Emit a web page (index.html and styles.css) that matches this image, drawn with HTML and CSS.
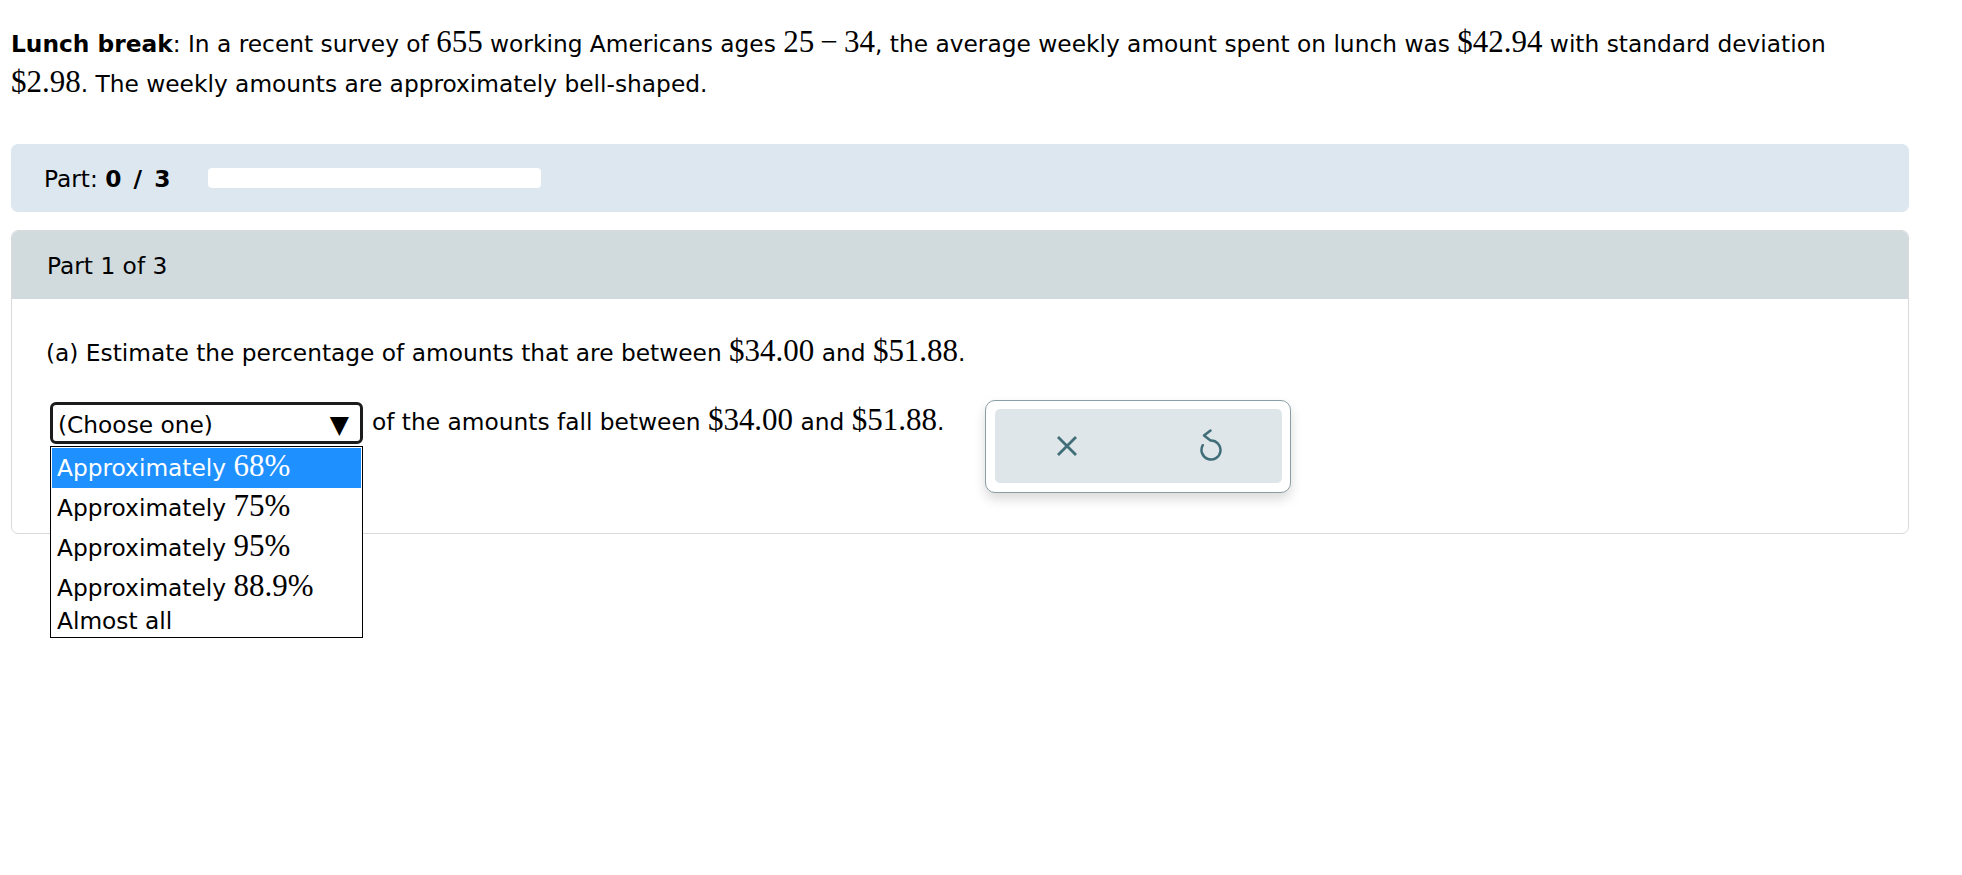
FILE: index.html
```html
<!DOCTYPE html>
<html>
<head>
<meta charset="utf-8">
<link rel="stylesheet" href="styles.css">
</head>
<body>
<div class="page">
  <p class="intro"><b>Lunch break</b>: In a recent survey of <span class="m">655</span> working Americans ages <span class="m">25&#8201;&#8722;&#8201;34</span>, the average weekly amount spent on lunch was <span class="m">$42.94</span> with standard deviation <span class="m">$2.98</span>. The weekly amounts are approximately bell-shaped.</p>

  <div class="progress">
    <span>Part: <b class="score">0 / 3</b></span>
    <div class="bar"></div>
  </div>

  <div class="card">
    <div class="card-head">Part 1 of 3</div>
    <div class="card-body">
      <p class="q">(a) Estimate the percentage of amounts that are between <span class="m">$34.00</span> and <span class="m">$51.88</span>.</p>
      <div class="answer-row">
        <div class="select-wrap">
          <div class="select"><span>(Choose one)</span><span class="arrow">&#9660;</span></div>
          <ul class="listbox">
            <li class="opt sel">Approximately <span class="m">68%</span></li>
            <li class="opt">Approximately <span class="m">75%</span></li>
            <li class="opt">Approximately <span class="m">95%</span></li>
            <li class="opt">Approximately <span class="m">88.9%</span></li>
            <li class="opt last">Almost all</li>
          </ul>
        </div>
        <span class="after">of the amounts fall between <span class="m">$34.00</span> and <span class="m">$51.88</span>.</span>
        <div class="tools">
          <div class="tools-inner">
            <div class="tool">
              <svg width="22" height="22" viewBox="0 0 22 22"><path d="M2 2 L20 20 M20 2 L2 20" stroke="#3f6d78" stroke-width="2.8" fill="none"/></svg>
            </div>
            <div class="tool">
              <svg width="30" height="34" viewBox="0 0 30 34"><path d="M14.5 1.5 L8 6.5 L14.5 11.5 A9.5 9.5 0 1 1 6.8 16.2" stroke="#3f6d78" stroke-width="2.5" fill="none" stroke-linecap="round" stroke-linejoin="round"/></svg>
            </div>
          </div>
        </div>
      </div>
    </div>
  </div>
</div>
</body>
</html>
```

FILE: styles.css
```css
html, body {
  margin: 0;
  padding: 0;
  background: #fff;
}
body {
  min-height: 875px;
  font-family: "DejaVu Sans", Verdana, sans-serif;
  font-size: 23.3px;
  color: #000;
}
.page {
  padding: 0 53px 0 11px;
}
.m {
  font-family: "Liberation Serif", "Times New Roman", serif;
  font-size: 1.33em;
  line-height: 1;
}
.intro {
  margin: 0;
  max-width: 1860px;
  padding-top: 24px;
  line-height: 40px;
}
.progress {
  margin-top: 40px;
  height: 68px;
  background: #dce7f0;
  border-radius: 7px;
  display: flex;
  align-items: center;
  padding-left: 33px;
}
.score {
  word-spacing: 4px;
}
.bar {
  margin-left: 38px;
  width: 333px;
  height: 20px;
  background: #fff;
  border-radius: 4px;
}
.card {
  margin-top: 18px;
  border: 1px solid #dadada;
  border-radius: 7px;
}
.card-head {
  height: 68px;
  background: #d1dadd;
  display: flex;
  align-items: center;
  padding-left: 35px;
  border-radius: 6px 6px 0 0;
}
.card-body {
  padding: 34px 0 40px 34px;
}
.q {
  margin: 0;
  line-height: 40px;
}
.answer-row {
  margin-top: 27px;
  display: flex;
  align-items: flex-start;
}
.select-wrap {
  position: relative;
  margin-top: 2px;
  margin-left: 4px;
}
.select {
  box-sizing: border-box;
  width: 313px;
  height: 42px;
  border: 3px solid #1c1c1c;
  border-radius: 6px;
  display: flex;
  align-items: center;
  justify-content: space-between;
  padding: 2px 11px 0 5px;
}
.arrow {
  font-size: 25px;
  line-height: 1;
}
.listbox {
  position: absolute;
  top: 44px;
  left: 0;
  box-sizing: border-box;
  width: 313px;
  margin: 0;
  padding: 1px;
  list-style: none;
  background: #fff;
  border: 1px solid #000;
  z-index: 5;
}
.opt {
  height: 40px;
  line-height: 40px;
  padding-left: 5px;
  white-space: nowrap;
}
.opt.sel {
  background: #1e90ff;
  color: #fff;
}
.opt.last {
  height: 28px;
  line-height: 26px;
}
.after {
  margin-left: 9px;
  margin-top: 2px;
  line-height: 40px;
}
.tools {
  margin-left: 41px;
  box-sizing: border-box;
  width: 306px;
  height: 93px;
  border: 1px solid #8b9ea6;
  border-radius: 10px;
  padding: 8px 8px 9px 9px;
  background: #fff;
  box-shadow: 0 6px 12px rgba(0, 0, 0, 0.15);
}
.tools-inner {
  height: 100%;
  background: #dfe6e9;
  border-radius: 5px;
  display: flex;
}
.tool {
  flex: 1;
  display: flex;
  align-items: center;
  justify-content: center;
}
```
